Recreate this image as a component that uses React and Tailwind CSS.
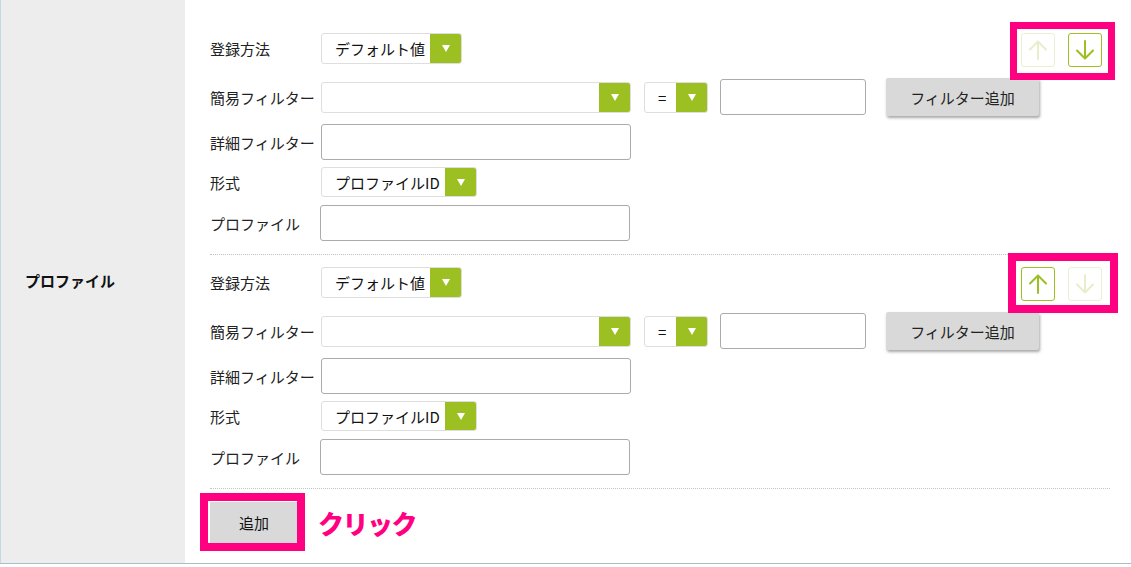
import React from "react";

function Select({ w, text }) {
  return (
    <div className={`flex h-[31px] ${w} border border-[#dedede] rounded-[3px] bg-white overflow-hidden`}>
      <div className="flex-1 flex items-center pl-[13px] text-[15px] leading-none text-[#111] whitespace-nowrap">{text}</div>
      <div className="w-[31px] bg-[#9cbf22] flex items-center justify-center">
        <div className="w-0 h-0 border-x-[4px] border-x-transparent border-t-[7px] border-t-white" />
      </div>
    </div>
  );
}

function Input({ w, h = "h-[36px]" }) {
  return <div className={`${w} ${h} border border-[#ababab] rounded-[3px] bg-white`} />;
}

function ArrowBtn({ dir, active }) {
  const c = active ? "#9cbf22" : "#e6eecb";
  return (
    <div
      className={`w-[34px] h-[34px] rounded-[3px] border flex items-center justify-center bg-white ${
        active ? "border-[#9cbf22]" : "border-[#e9f0d4]"
      }`}
    >
      <svg width="20" height="20" viewBox="0 0 20 20" fill="none" stroke={c} strokeWidth="2" strokeLinecap="round" strokeLinejoin="round">
        {dir === "up" ? (
          <path d="M10 19V1.5M2 9.5L10 1.5L18 9.5" />
        ) : (
          <path d="M10 1V18.5M2 10.5L10 18.5L18 10.5" />
        )}
      </svg>
    </div>
  );
}

function Label({ children }) {
  return <div className="w-[111px] shrink-0 text-[15px] leading-none text-[#222] whitespace-nowrap">{children}</div>;
}

function Block({ upActive, downActive, pink, pt }) {
  return (
    <div className={`${pt} pb-[13px] border-b border-dotted border-[#c4c4c4]`}>
      <div className="flex items-start justify-between">
        <div className="flex items-center h-[31px]">
          <Label>登録方法</Label>
          <Select w="w-[141px]" text="デフォルト値" />
        </div>
        <div className="relative flex gap-[13px] mr-[8px]">
          <div className={`absolute border-[#ff0080] ${pink}`} />
          <ArrowBtn dir="up" active={upActive} />
          <ArrowBtn dir="down" active={downActive} />
        </div>
      </div>
      <div className="flex items-center h-[38px] mt-[11px]">
        <Label>簡易フィルター</Label>
        <Select w="w-[310px]" text="" />
        <div className="ml-[13px]">
          <Select w="w-[64px]" text="=" />
        </div>
        <div className="ml-[12px]">
          <Input w="w-[146px]" />
        </div>
        <div className="ml-[20px] w-[153px] h-[38px] bg-[#d9d9d9] rounded-[2px] shadow-[1px_2px_3px_rgba(0,0,0,0.35)] flex items-center justify-center text-[15px] leading-none text-[#222]">
          フィルター追加
        </div>
      </div>
      <div className="flex items-center mt-[8px]">
        <Label>詳細フィルター</Label>
        <Input w="w-[310px]" />
      </div>
      <div className="flex items-center mt-[7px]">
        <Label>形式</Label>
        <div className="h-[30px] flex">
          <Select w="w-[156px] !h-[30px]" text="プロファイルID" />
        </div>
      </div>
      <div className="flex items-center mt-[8px]">
        <div className="w-[110px] shrink-0 text-[15px] leading-none text-[#222]">プロファイル</div>
        <Input w="w-[310px]" />
      </div>
    </div>
  );
}

export default function App() {
  return (
    <div className="w-[1131px] h-[567px] bg-white font-['Noto_Sans_CJK_JP','Noto_Sans',sans-serif] overflow-hidden">
      <div className="flex h-[564px] border-b border-[#a8bdca]">
        <div className="w-[185px] shrink-0 bg-[#ededed] border-l border-[#c3d9e7] flex items-center pl-[24px] pb-[3px]">
          <span className="text-[15px] font-bold text-[#111] leading-none">プロファイル</span>
        </div>
        <div className="flex-1 bg-white pl-[25px] pr-[21px] pt-[19px]">
          <Block pt="pt-[14px]" upActive={false} downActive={true} pink="-left-[11px] -right-[13px] -top-[11px] -bottom-[13px] border-[7px]" />
          <Block pt="pt-[12px]" upActive={true} downActive={false} pink="-left-[13px] -right-[16px] -top-[14px] -bottom-[12px] border-[8px]" />
          <div className="flex items-center mt-[13px]">
            <div className="relative w-[88px] h-[41px] bg-[#d9d9d9] flex items-center justify-center text-[15px] leading-none text-[#111]">
              追加
              <div className="absolute -left-[10px] -right-[7px] -top-[9px] -bottom-[8px] border-[8px] border-[#ff0080]" />
            </div>
            <div className="ml-[20px] text-[26px] font-black text-[#ff0080] leading-none tracking-[-1.5px]">クリック</div>
          </div>
        </div>
      </div>
    </div>
  );
}
